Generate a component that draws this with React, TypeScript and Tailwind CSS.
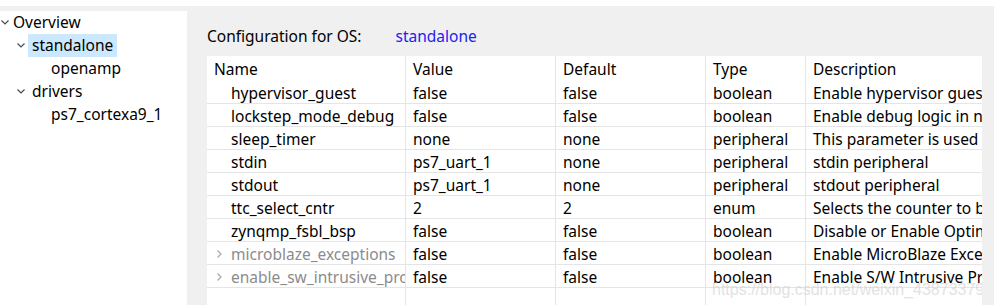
import React from 'react';

type Row = { name: string; value: string; def: string; type: string; desc: string; group?: boolean };

const ROWS: Row[] = [
  { name: 'hypervisor_guest', value: 'false', def: 'false', type: 'boolean', desc: 'Enable hypervisor guest support' },
  { name: 'lockstep_mode_debug', value: 'false', def: 'false', type: 'boolean', desc: 'Enable debug logic in non-lockstep mode' },
  { name: 'sleep_timer', value: 'none', def: 'none', type: 'peripheral', desc: 'This parameter is used to select' },
  { name: 'stdin', value: 'ps7_uart_1', def: 'none', type: 'peripheral', desc: 'stdin peripheral' },
  { name: 'stdout', value: 'ps7_uart_1', def: 'none', type: 'peripheral', desc: 'stdout peripheral' },
  { name: 'ttc_select_cntr', value: '2', def: '2', type: 'enum', desc: 'Selects the counter to be used' },
  { name: 'zynqmp_fsbl_bsp', value: 'false', def: 'false', type: 'boolean', desc: 'Disable or Enable Optimization' },
  { name: 'microblaze_exceptions', value: 'false', def: 'false', type: 'boolean', desc: 'Enable MicroBlaze Exceptions', group: true },
  { name: 'enable_sw_intrusive_profiling', value: 'false', def: 'false', type: 'boolean', desc: 'Enable S/W Intrusive Profiling', group: true },
];

function ChevronDown() {
  return (
    <svg width="8" height="5" viewBox="0 0 8 5" className="shrink-0">
      <path d="M0.5 0.5 L4 4 L7.5 0.5" fill="none" stroke="#4a4a4a" strokeWidth="1.2" />
    </svg>
  );
}

function ChevronRight() {
  return (
    <svg width="5" height="8" viewBox="0 0 5 8" className="shrink-0">
      <path d="M0.5 0.5 L4 4 L0.5 7.5" fill="none" stroke="#a8a8a8" strokeWidth="1.2" />
    </svg>
  );
}

const cell = 'h-[23px] leading-[22px] pt-[1px] pl-[7px] whitespace-nowrap overflow-hidden border-r border-[#e5e5e5]';
const head = 'h-[25px] leading-[25px] pt-[1px] pl-[7px] whitespace-nowrap overflow-hidden border-r border-[#e5e5e5]';

export default function App() {
  return (
    <div
      className="relative w-[994px] h-[305px] overflow-hidden bg-[#f0f0f0] border-t-[6px] border-white flex text-[15.5px] text-black"
      style={{ fontFamily: '"Noto Sans", "Open Sans", sans-serif' }}
    >
      {/* tree */}
      <div className="mt-[5px] w-[187px] shrink-0 bg-white">
        <div className="flex items-center h-[23px] pl-[1px]">
          <ChevronDown />
          <span className="ml-[4px]">Overview</span>
        </div>
        <div className="flex items-center h-[23px] pl-[17px]">
          <ChevronDown />
          <span className="ml-[3px] px-[4px] bg-[#cce8ff] leading-[23px]">standalone</span>
        </div>
        <div className="flex items-center h-[23px] pl-[51px]">openamp</div>
        <div className="flex items-center h-[23px] pl-[17px]">
          <ChevronDown />
          <span className="ml-[7px]">drivers</span>
        </div>
        <div className="flex items-center h-[23px] pl-[51px]">ps7_cortexa9_1</div>
      </div>

      {/* config */}
      <div className="flex-1 pl-[20px]">
        <div className="flex h-[23px] leading-[23px] mt-[19px]">
          <span>Configuration for OS:</span>
          <span className="ml-[34px] text-[#2222ee]">standalone</span>
        </div>
        <div className="mt-[8px] w-[775px] h-[260px] bg-white grid grid-cols-[199px_150px_150px_100px_176px] content-start">
          <div className={head}>Name</div>
          <div className={head}>Value</div>
          <div className={head}>Default</div>
          <div className={head}>Type</div>
          <div className={`${head} border-r-0`}>Description</div>
          {ROWS.map((r) => (
            <React.Fragment key={r.name}>
              <div className={`${cell} border-b flex items-center ${r.group ? 'text-[#8c8c8c]' : ''}`}>
                <span className="w-[17px] shrink-0 pl-[3px] flex">{r.group && <ChevronRight />}</span>
                <span className="whitespace-nowrap">{r.name}</span>
              </div>
              <div className={`${cell} border-b`}>{r.value}</div>
              <div className={`${cell} border-b`}>{r.def}</div>
              <div className={`${cell} border-b`}>{r.type}</div>
              <div className={`${cell} border-b border-r-0`}>{r.desc}</div>
            </React.Fragment>
          ))}
          <div className={`${cell} h-[40px]`} />
          <div className={`${cell} h-[40px]`} />
          <div className={`${cell} h-[40px]`} />
          <div className={`${cell} h-[40px]`} />
          <div className={`${cell} h-[40px] border-r-0`} />
        </div>
      </div>

      {/* watermark */}
      <div
        className="absolute left-[712px] top-[272px] w-[270px] overflow-hidden whitespace-nowrap text-[16px] text-[#d0d0d0] opacity-60"
        style={{ fontFamily: '"Liberation Sans", Arial, sans-serif' }}
      >
        https://blog.csdn.net/weixin_43873379
      </div>
    </div>
  );
}
